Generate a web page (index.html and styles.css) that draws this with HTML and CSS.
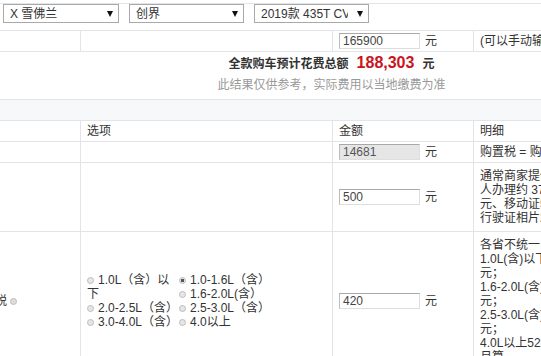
FILE: index.html
```html
<!DOCTYPE html>
<html lang="zh-CN">
<head>
  <meta charset="UTF-8" />
  <meta name="viewport" content="width=device-width, initial-scale=1.0" />
  <title>购车费用计算</title>
  <link rel="stylesheet" href="styles.css">
</head>
<body>
  <div class="car-picker">
    <label class="picker picker-brand">
      <select id="brand"><option>X 雪佛兰</option></select>
    </label>
    <label class="picker picker-series">
      <select id="series"><option>创界</option></select>
    </label>
    <label class="picker picker-spec">
      <select id="spec"><option>2019款 435T CVT两驱豪华版</option></select>
    </label>
  </div>

  <div class="calc">
    <table class="calc-table">
      <colgroup>
        <col class="col-name">
        <col class="col-option">
        <col class="col-amount">
        <col class="col-detail">
      </colgroup>
      <tr>
        <td></td>
        <td></td>
        <td><input class="amount" id="price" value="165900"><span class="unit">元</span></td>
        <td>(可以手动输入修改)</td>
      </tr>
      <tr class="total-row">
        <td colspan="4">
          <div class="total-line">全款购车预计花费总额<span class="total-num" id="total">188,303</span>元</div>
          <div class="total-note">此结果仅供参考，实际费用以当地缴费为准</div>
        </td>
      </tr>
      <tr class="band-row"><td colspan="4"></td></tr>
      <tr class="head-row">
        <th></th>
        <th>选项</th>
        <th>金额</th>
        <th>明细</th>
      </tr>
      <tr>
        <td></td>
        <td></td>
        <td><input class="amount" id="purchase-tax" value="14681" disabled><span class="unit">元</span></td>
        <td>购置税 = 购车价÷1.13×10%</td>
      </tr>
      <tr>
        <td></td>
        <td></td>
        <td><input class="amount" id="plate-fee" value="500"><span class="unit">元</span></td>
        <td class="detail">
          通常商家提供上牌服务约500元，个<br>
          人办理约 373 元，其中：牌照费 125<br>
          元、移动证5元、环保标志50<br>
          行驶证相片20元、拓号费173元
        </td>
      </tr>
      <tr>
        <td class="name">车船税<span class="tip"></span></td>
        <td>
          <div class="engine-options">
            <label><input type="radio" name="engine">1.0L（含）以下</label>
            <label><input type="radio" name="engine" checked>1.0-1.6L（含）</label>
            <label><input type="radio" name="engine">1.6-2.0L(含）</label>
            <label><input type="radio" name="engine">2.0-2.5L（含）</label>
            <label><input type="radio" name="engine">2.5-3.0L（含）</label>
            <label><input type="radio" name="engine">3.0-4.0L（含）</label>
            <label><input type="radio" name="engine">4.0以上</label>
          </div>
        </td>
        <td><input class="amount" id="vessel-tax" value="420"><span class="unit">元</span></td>
        <td class="detail">
          各省不统一，以下为参考标准：<br>
          1.0L(含)以下 60～360<br>
          元；<br>
          1.6-2.0L(含) 360～660<br>
          元；<br>
          2.5-3.0L(含) 1200～2400<br>
          元；<br>
          4.0L以上5280元/年，不足一年按<br>
          月算。
        </td>
      </tr>
    </table>
  </div>
</body>
</html>
```

FILE: styles.css
```css
html, body { overflow: hidden; }
body { margin: 0; font-family: "Liberation Sans", "Noto Sans CJK SC", sans-serif; font-size: 12px; color: #333; background: #fff; }

.car-picker { display: flex; gap: 10px; margin-top: 3px; padding: 0 0 7px 3px; border-top: 1px solid #e1e4e8; }
.picker { position: relative; display: block; }
.picker-brand { width: 116px; }
.picker-series, .picker-spec { width: 115px; }
.picker select { -webkit-appearance: none; appearance: none; display: block; width: 100%; height: 19px; margin: 0; padding: 0 20px 0 6px; border: 1px solid #a9a9a9; border-radius: 0; background: #fff; font: inherit; color: #333; }
.picker::after { content: ""; position: absolute; right: 6px; top: 7px; border-left: 3px solid transparent; border-right: 3px solid transparent; border-top: 6px solid #111; pointer-events: none; }

.calc { margin-left: -36px; }
.calc-table { width: 734px; border-collapse: collapse; table-layout: fixed; }
.col-name { width: 116px; }
.col-option { width: 252px; }
.col-amount { width: 141px; }
.col-detail { width: 225px; }
.calc-table td, .calc-table th { border: 1px solid #e1e4e8; padding: 2px 6px; line-height: 14px; text-align: left; font-weight: normal; vertical-align: middle; white-space: nowrap; overflow: hidden; }
.calc-table th { padding: 3px 6px; }
.calc-table .detail { padding: 6px 6px; }

.amount { box-sizing: border-box; width: 81px; height: 16px; margin: 0; padding: 0 3px; vertical-align: middle; border: 1px solid; border-color: #a8a8a8 #dedede #dedede #bcbcbc; font: inherit; color: #444; background: #fff; }
.amount:disabled { background: #e6e6e6; color: #555; }
.unit { margin-left: 5px; vertical-align: middle; }

.calc-table .total-row td { text-align: center; padding: 0 0 4px; }
.total-line { line-height: 22px; font-weight: bold; }
.total-num { margin: 0 8px; font-size: 16px; color: #c9151e; }
.total-note { line-height: 20px; color: #999; }

.calc-table .band-row td { height: 20px; padding: 0; background: #f6f8fa; }

.name .tip { display: inline-block; width: 5px; height: 5px; margin-left: 3px; border: 1px solid #bdbdbd; border-radius: 50%; background: #dcdcdc; vertical-align: middle; }

.engine-options { display: grid; grid-template-columns: 92px 92px; line-height: 14px; white-space: normal; }
.engine-options label:first-child { grid-row: span 2; }
.engine-options input { -webkit-appearance: none; appearance: none; width: 7px; height: 7px; margin: 0 4px 0 0; border: 1px solid #bdbdbd; border-radius: 50%; background: #e6e6e6; vertical-align: 0; }
.engine-options input:checked { background: radial-gradient(circle, #555 0 1.5px, #e6e6e6 2px); }
```
